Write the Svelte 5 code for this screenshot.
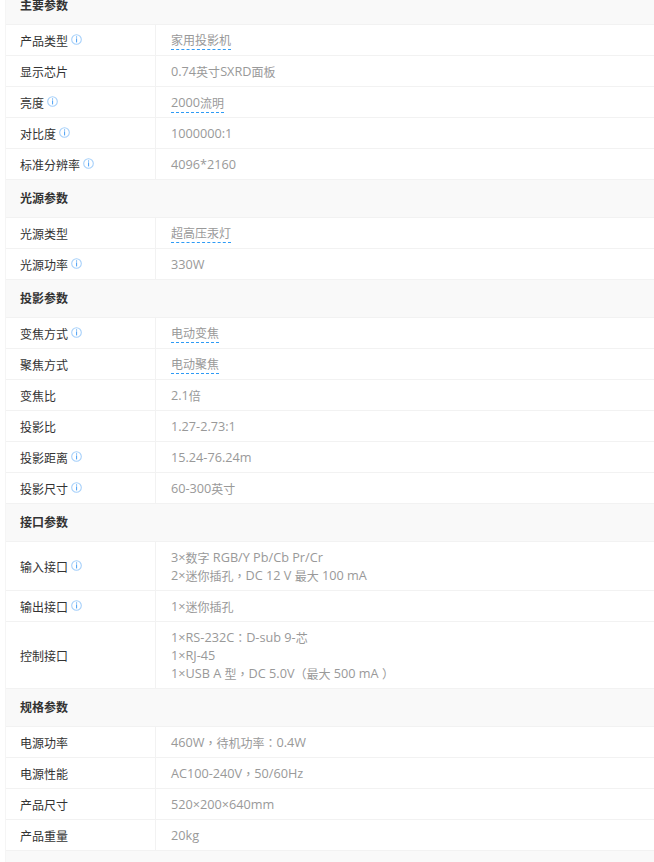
<script>
  const sections = [
    { title: '主要参数', rows: [
      { k: '产品类型', i: 1, v: ['家用投影机'], u: 1 },
      { k: '显示芯片', v: ['0.74英寸SXRD面板'] },
      { k: '亮度', i: 1, v: ['2000流明'], u: 1 },
      { k: '对比度', i: 1, v: ['1000000:1'] },
      { k: '标准分辨率', i: 1, v: ['4096*2160'] }
    ]},
    { title: '光源参数', rows: [
      { k: '光源类型', v: ['超高压汞灯'], u: 1 },
      { k: '光源功率', i: 1, v: ['330W'] }
    ]},
    { title: '投影参数', rows: [
      { k: '变焦方式', i: 1, v: ['电动变焦'], u: 1 },
      { k: '聚焦方式', v: ['电动聚焦'], u: 1 },
      { k: '变焦比', v: ['2.1倍'] },
      { k: '投影比', v: ['1.27-2.73:1'] },
      { k: '投影距离', i: 1, v: ['15.24-76.24m'] },
      { k: '投影尺寸', i: 1, v: ['60-300英寸'] }
    ]},
    { title: '接口参数', rows: [
      { k: '输入接口', i: 1, v: ['3×数字 RGB/Y Pb/Cb Pr/Cr', '2×迷你插孔，DC 12 V 最大 100 mA'] },
      { k: '输出接口', i: 1, v: ['1×迷你插孔'] },
      { k: '控制接口', v: ['1×RS-232C：D-sub 9-芯', '1×RJ-45', '1×USB A 型，DC 5.0V（最大 500 mA ）'] }
    ]},
    { title: '规格参数', rows: [
      { k: '电源功率', v: ['460W，待机功率：0.4W'] },
      { k: '电源性能', v: ['AC100-240V，50/60Hz'] },
      { k: '产品尺寸', v: ['520×200×640mm'] },
      { k: '产品重量', v: ['20kg'] }
    ]}
  ];

  // Latin and CJK runs are sized apart, as in the original mixed-font rendering.
  const runs = (s) =>
    s.match(/[\u0020-\u00ff]+|[，：（）]|[^\u0020-\u00ff，：（）]+/g).map((t) => ({
      t,
      c: /^[\u0020-\u00ff]/.test(t) ? 'lat' : /^[，：（）]/.test(t) ? 'pun' : 'cjk'
    }));
</script>

<div class="sheet">
  {#each sections as s, si}
    <div class="head" class:first={si === 0}>{s.title}</div>
    {#each s.rows as r}
      <div class="row">
        <div class="key">
          <span>{r.k}</span>
          {#if r.i}
            <svg class="info" viewBox="0 0 11 11" width="11" height="11" aria-hidden="true">
              <circle cx="5.5" cy="5.5" r="4.8" fill="none" stroke="#a6d0fa" stroke-width="1.1" />
              <rect x="5" y="2.4" width="1.1" height="1.2" fill="#5aa8f5" />
              <rect x="5" y="4.4" width="1.1" height="4" fill="#5aa8f5" />
            </svg>
          {/if}
        </div>
        <div class="val">
          {#each r.v as line}
            <div class="line"><span class:ub={r.u}>{#each runs(line) as run}<span class={run.c}>{run.t}</span>{/each}</span></div>
          {/each}
        </div>
      </div>
    {/each}
  {/each}
</div>

<style>
  :global(body) {
    margin: 0;
    background: #fff;
  }
  .sheet {
    width: 649px;
    height: 862px;
    overflow: hidden;
    box-sizing: border-box;
    margin-left: 5px;
    background: #f9f9f9;
    border-left: 1px solid #f5f5f5;
    font-family: "Open Sans", "Noto Sans CJK SC", sans-serif;
    font-size: 12px;
  }
  .head {
    height: 37px;
    line-height: 37px;
    padding-left: 14px;
    font-weight: 700;
    color: #333;
    border-bottom: 1px solid #f2f2f2;
  }
  .head.first {
    height: 24px;
    line-height: 11px;
  }
  .row {
    display: flex;
    background: #fff;
    border-bottom: 1px solid #f2f2f2;
  }
  .key {
    width: 150px;
    flex: none;
    box-sizing: border-box;
    padding: 2px 0 0 14px;
    display: flex;
    align-items: center;
    gap: 3px;
    color: #333;
    border-right: 1px solid #f2f2f2;
  }
  .info {
    flex: none;
    margin-top: -3px;
  }
  .val {
    flex: 1;
    padding: 6px 0 6px 15px;
    color: #999;
  }
  .line {
    height: 18px;
    line-height: 18px;
  }
  .lat {
    font-size: 12.7px;
  }
  .cjk,
  .pun {
    vertical-align: -1px;
  }
  .pun {
    font-family: "Noto Sans CJK TC", sans-serif;
  }
  .ub {
    padding-bottom: 1px;
    border-bottom: 1px dashed #2e9bf5;
  }
</style>
